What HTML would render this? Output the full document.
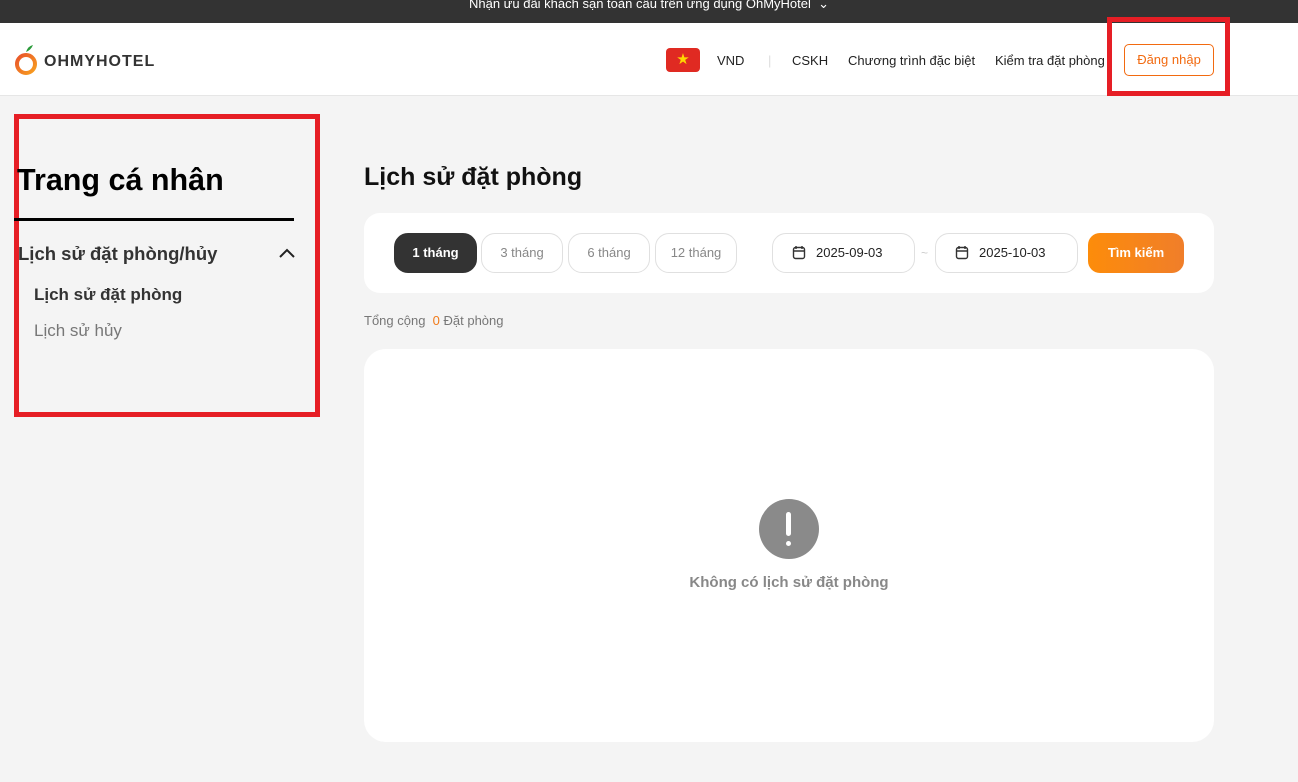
<!DOCTYPE html>
<html><head><meta charset="utf-8"><style>
*{box-sizing:border-box;margin:0;padding:0}
body{width:1298px;height:782px;overflow:hidden;background:#f4f4f4;font-family:"Liberation Sans",sans-serif;position:relative;color:#222}
.top{position:absolute;left:0;top:0;width:1298px;height:23px;background:#333;color:#fff;font-size:13px;text-align:center;line-height:8px}
.hdr{position:absolute;left:0;top:23px;width:1298px;height:73px;background:#fff;border-bottom:1px solid #e6e6e6}
.abs{position:absolute}
.red{position:absolute;border:5px solid #e61e25}
.pill{position:absolute;top:233px;height:40px;border-radius:14px;border:1px solid #e0e0e0;background:#fff;font-size:13px;color:#888;text-align:center;line-height:38px}
</style></head><body>
<div class="top">Nhận ưu đãi khách sạn toàn cầu trên ứng dụng OhMyHotel &nbsp;⌄</div>
<div class="hdr">
 <svg class="abs" style="left:13px;top:19px" width="30" height="36" viewBox="0 0 30 36"><defs><linearGradient id="g" x1="0" y1="0" x2="1" y2="1"><stop offset="0" stop-color="#e8522a"/><stop offset="1" stop-color="#f8a020"/></linearGradient></defs><path d="M13 10 Q15 4 20 3 Q18 8 13 10Z" fill="#2a9a3a"/><circle cx="13" cy="22" r="9" fill="none" stroke="url(#g)" stroke-width="4"/></svg>
 <div class="abs" style="left:44px;top:30px;font-size:16px;font-weight:bold;letter-spacing:1px;color:#333">OHMYHOTEL</div>
 <div class="abs" style="left:666px;top:25px;width:34px;height:24px;background:#e02a22;border-radius:4px;color:#ffd700;text-align:center;font-size:15px;line-height:24px">★</div>
 <div class="abs" style="left:717px;top:30px;font-size:13px">VND</div>
 <div class="abs" style="left:768px;top:30px;font-size:13px;color:#ddd">|</div>
 <div class="abs" style="left:792px;top:30px;font-size:13px">CSKH</div>
 <div class="abs" style="left:848px;top:30px;font-size:13px">Chương trình đặc biệt</div>
 <div class="abs" style="left:995px;top:30px;font-size:13px">Kiểm tra đặt phòng</div>
 <div class="abs" style="left:1124px;top:21px;width:90px;height:32px;border:1px solid #f26a10;border-radius:5px;color:#f26a10;font-size:13px;text-align:center;line-height:30px">Đăng nhập</div>
</div>
<div class="red" style="left:1107px;top:17px;width:123px;height:79px"></div>
<div class="red" style="left:14px;top:114px;width:306px;height:303px"></div>
<div class="abs" style="left:17px;top:163px;font-size:30.5px;font-weight:bold;color:#000">Trang cá nhân</div>
<div class="abs" style="left:14px;top:218px;width:280px;height:3px;background:#000"></div>
<div class="abs" style="left:18px;top:243px;font-size:18.5px;font-weight:bold;color:#333">Lịch sử đặt phòng/hủy</div>
<svg class="abs" style="left:279px;top:248px" width="16" height="10"><path d="M1 9 L8 2 L15 9" fill="none" stroke="#222" stroke-width="2"/></svg>
<div class="abs" style="left:34px;top:285px;font-size:17px;font-weight:bold;color:#333">Lịch sử đặt phòng</div>
<div class="abs" style="left:34px;top:321px;font-size:17px;color:#777">Lịch sử hủy</div>
<div class="abs" style="left:364px;top:163px;font-size:25px;font-weight:bold;color:#111">Lịch sử đặt phòng</div>
<div class="abs" style="left:364px;top:213px;width:850px;height:80px;background:#fff;border-radius:16px"></div>
<div class="pill" style="left:394px;width:83px;background:#333;border-color:#333;color:#fff;font-weight:bold">1 tháng</div>
<div class="pill" style="left:481px;width:82px">3 tháng</div>
<div class="pill" style="left:568px;width:82px">6 tháng</div>
<div class="pill" style="left:655px;width:82px">12 tháng</div>
<div class="pill" style="left:772px;width:143px;color:#222;text-align:left;padding-left:43px">2025-09-03</div>
<div class="pill" style="left:935px;width:143px;color:#222;text-align:left;padding-left:43px">2025-10-03</div>
<svg class="abs" style="left:792px;top:245px" width="14" height="15"><rect x="1.5" y="2.5" width="11" height="11" rx="2" fill="none" stroke="#333" stroke-width="1.4"/><path d="M4 1v3M10 1v3M1.5 6h11" stroke="#333" stroke-width="1.4"/></svg>
<svg class="abs" style="left:955px;top:245px" width="14" height="15"><rect x="1.5" y="2.5" width="11" height="11" rx="2" fill="none" stroke="#333" stroke-width="1.4"/><path d="M4 1v3M10 1v3M1.5 6h11" stroke="#333" stroke-width="1.4"/></svg>
<div class="abs" style="left:921px;top:246px;font-size:12px;color:#ccc">~</div>
<div class="abs" style="left:1088px;top:233px;width:96px;height:40px;border-radius:12px;background:linear-gradient(90deg,#fd8c0a,#f07e2a);color:#fff;font-weight:bold;font-size:13px;text-align:center;line-height:40px">Tìm kiếm</div>
<div class="abs" style="left:364px;top:313px;font-size:13px;color:#777">Tổng cộng &nbsp;<span style="color:#f07a1a">0</span> Đặt phòng</div>
<div class="abs" style="left:364px;top:349px;width:850px;height:393px;background:#fff;border-radius:22px"></div>
<div class="abs" style="left:759px;top:499px;width:60px;height:60px;border-radius:50%;background:#8a8a8a"></div>
<div class="abs" style="left:786px;top:512px;width:5px;height:24px;background:#fff;border-radius:3px"></div>
<div class="abs" style="left:786px;top:541px;width:5px;height:5px;background:#fff;border-radius:50%"></div>
<div class="abs" style="left:364px;top:574px;width:850px;text-align:center;font-size:15px;font-weight:bold;color:#888">Không có lịch sử đặt phòng</div>
</body></html>
